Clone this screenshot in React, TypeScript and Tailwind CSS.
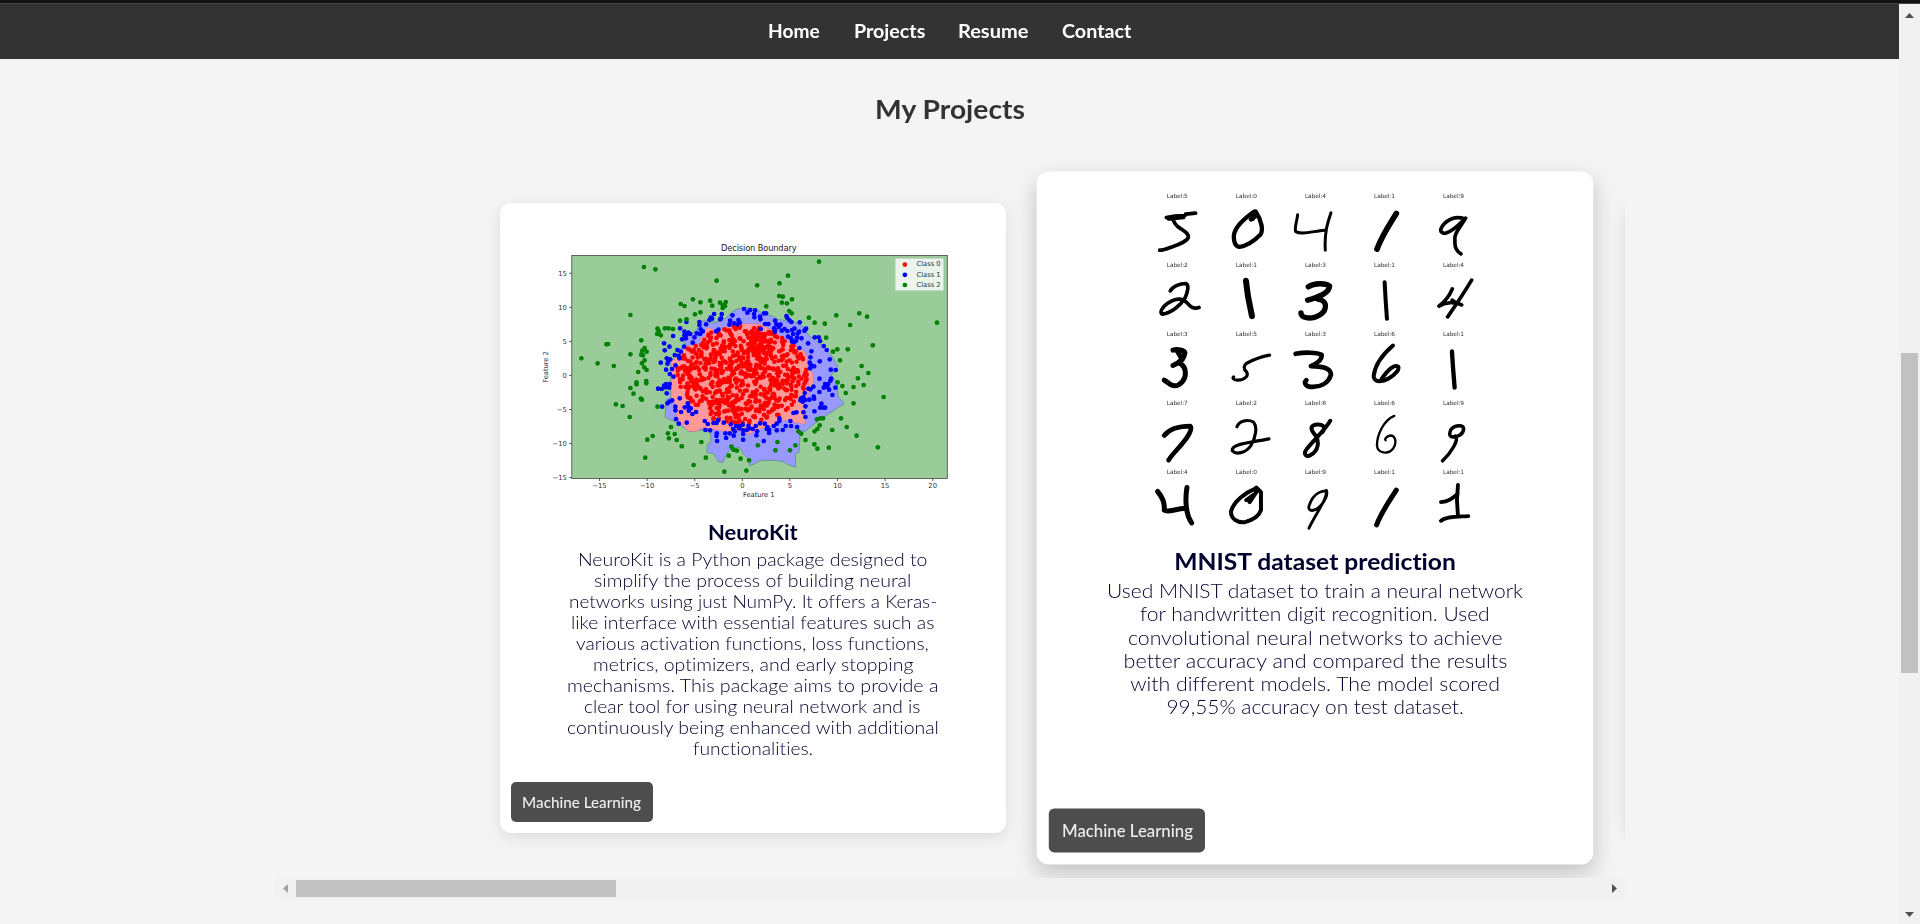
import { useLayoutEffect, useRef, useState } from "react";

type Point = [number, number];

/** One line of text, stretched or narrowed to take up the given width. */
function Line({ text, width }: { text: string; width: number }) {
  const ref = useRef<HTMLSpanElement>(null);
  const [scale, setScale] = useState(1);
  useLayoutEffect(() => {
    if (ref.current) setScale(width / ref.current.offsetWidth);
  }, [text, width]);
  return (
    <span className="mx-auto block text-left whitespace-nowrap" style={{ width }}>
      <span ref={ref} className="inline-block origin-left" style={{ transform: `scaleX(${scale})` }}>
        {text}
      </span>
    </span>
  );
}

const GREEN: Point[] = [
  [455, 231], [489, 238], [670, 272], [790, 286], [881, 257], [973, 215], [856, 280], [600, 328], [622, 337], [651, 332],
  [657, 347], [564, 342], [575, 348], [680, 338], [697, 336], [688, 345], [695, 348], [688, 354], [622, 367], [606, 373],
  [562, 392], [581, 388], [415, 375], [855, 318], [866, 320], [893, 328], [863, 338], [878, 340], [817, 349], [885, 363],
  [892, 370], [943, 383], [960, 398], [990, 401], [1024, 376], [1065, 405], [1092, 370], [1115, 380], [1322, 398], [1132, 466],
  [994, 443], [1027, 478], [1058, 478], [1014, 485], [1035, 511], [1099, 528], [1119, 549], [1088, 565], [1105, 585], [1075, 591],
  [1042, 588], [1028, 577], [1052, 609], [1075, 640], [1164, 621], [1147, 772], [1084, 737], [1055, 711], [1038, 685], [1012, 720],
  [1002, 773], [968, 776], [959, 763], [933, 750], [960, 724], [968, 717], [975, 706], [967, 688], [977, 685], [985, 685],
  [912, 724], [920, 731], [903, 766], [887, 781], [844, 781], [850, 756], [792, 766], [758, 842], [766, 811], [741, 806],
  [730, 782], [720, 779], [714, 770], [706, 797], [693, 845], [638, 803], [602, 825], [625, 756], [567, 769], [552, 750],
  [546, 732], [535, 711], [526, 730], [529, 745], [481, 738], [465, 749], [459, 803], [413, 681], [392, 648], [372, 643],
  [446, 626], [449, 629], [424, 611], [415, 594], [433, 577], [433, 583], [462, 573], [462, 580], [438, 546], [463, 540],
  [456, 532], [449, 520], [457, 511], [447, 494], [452, 496], [463, 485], [457, 474], [450, 482], [447, 451], [415, 493],
  [366, 528], [318, 520], [270, 505], [344, 463], [349, 462], [494, 432], [505, 436], [499, 424], [495, 416], [517, 415],
  [528, 415], [541, 417], [495, 650],
];

const BLUE: Point[] = [
  [252, 57], [262, 68], [270, 60], [285, 61], [282, 72], [312, 70], [318, 70], [300, 80], [283, 82], [217, 76],
  [210, 92], [235, 90], [239, 98], [232, 103], [222, 100], [208, 104], [185, 72], [183, 85], [180, 88], [162, 72],
  [152, 83], [156, 86], [148, 90], [118, 96], [118, 105], [138, 103], [79, 96], [60, 115], [73, 125], [85, 128],
  [78, 135], [90, 132], [73, 136], [39, 138], [103, 142], [110, 130], [122, 118], [128, 124], [120, 132], [168, 124],
  [175, 119], [66, 148], [77, 145], [98, 158], [12, 160], [28, 170], [14, 181], [52, 180], [62, 185], [72, 170],
  [44, 195], [56, 198], [58, 205], [20, 205], [25, 212], [2, 218], [30, 208], [22, 221], [46, 226], [36, 237],
  [18, 239], [29, 252], [40, 260], [5, 297], [12, 287], [18, 282], [29, 282], [27, 293], [16, 292], [20, 310],
  [-6, 296], [6, 350], [22, 340], [28, 335], [36, 331], [59, 325], [46, 350], [46, 361], [48, 387], [63, 366],
  [56, 401], [83, 340], [74, 352], [85, 350], [92, 355], [97, 372], [80, 398], [86, 362], [108, 366], [134, 393],
  [143, 402], [136, 420], [150, 421], [160, 399], [169, 399], [174, 391], [191, 398], [212, 403], [170, 430], [169, 438],
  [171, 453], [196, 430], [198, 444], [209, 430], [221, 437], [219, 417], [228, 408], [237, 415], [248, 404], [249, 421],
  [249, 432], [249, 449], [260, 420], [265, 408], [278, 417], [287, 408], [291, 424], [289, 436], [300, 400], [311, 453],
  [314, 401], [322, 411], [327, 420], [327, 429], [341, 408], [350, 401], [358, 385], [358, 393], [350, 421], [368, 420],
  [377, 408], [393, 408], [391, 393], [411, 411], [400, 369], [409, 367], [430, 367], [436, 381], [436, 349], [428, 335],
  [421, 331], [430, 321], [434, 309], [448, 329], [461, 320], [445, 296], [460, 290], [451, 298], [478, 306], [478, 266],
  [495, 282], [504, 282], [501, 290], [491, 293], [507, 299], [511, 272], [513, 266], [517, 315], [526, 293], [512, 239],
  [527, 240], [509, 208], [500, 180], [491, 168], [479, 214], [480, 153], [476, 142], [464, 142], [454, 184], [451, 202],
  [453, 226], [462, 229], [450, 235], [449, 218], [444, 160], [438, 116], [433, 122], [419, 97], [418, 174], [424, 145],
  [411, 142], [413, 130], [417, 125], [403, 155], [396, 155], [393, 145], [384, 140], [382, 123], [373, 117], [365, 122],
  [356, 111], [361, 104], [349, 103], [345, 92], [344, 125], [342, 115], [345, 120], [325, 102], [315, 102], [302, 117],
  [301, 88], [379, 78], [381, 83], [388, 91], [394, 96], [396, 120], [403, 116], [399, 132], [408, 152], [484, 341],
  [480, 353], [491, 353], [495, 353], [463, 364], [462, 326], [436, 330], [423, 325], [268, 415], [224, 424], [240, 408],
  [320, 417],
];

const RED_EDGE: Point[] = [
  [135, 118], [150, 113], [165, 122], [200, 112], [250, 101], [300, 102], [330, 118], [380, 150], [430, 180], [442, 200],
  [444, 235], [460, 252], [460, 288], [450, 300], [440, 320], [430, 345], [437, 380], [435, 403], [400, 397], [370, 390],
  [340, 406], [300, 418], [265, 433], [245, 422], [210, 428], [170, 420], [130, 412], [110, 424], [85, 424], [65, 405],
  [50, 385], [45, 345], [33, 320], [33, 215], [60, 190], [80, 168], [125, 158], [120, 145], [134, 138],
];

const BLUE_EDGE: Point[] = [
  [215, 66], [228, 58], [250, 53], [285, 56], [300, 66], [340, 80], [352, 88], [380, 92], [405, 97], [432, 112], [446, 136],
  [470, 153], [495, 176], [515, 198], [533, 228], [530, 238], [513, 255], [522, 265], [532, 285], [533, 318], [553, 341],
  [500, 375], [465, 400], [440, 420], [420, 432], [417, 487], [406, 492], [407, 532], [380, 522], [372, 516], [345, 511],
  [300, 512], [270, 528], [262, 505], [248, 490], [238, 472], [215, 476], [200, 490], [188, 518], [175, 515], [160, 490],
  [140, 488], [142, 462], [152, 458], [152, 418], [88, 424], [45, 395], [15, 382], [18, 330], [31, 320], [32, 215],
  [50, 190], [72, 165], [75, 140], [110, 120], [120, 98], [134, 90], [150, 98], [190, 92],
];

function inside([x, y]: Point, poly: Point[]) {
  let hit = false;
  for (let i = 0, j = poly.length - 1; i < poly.length; j = i++) {
    const [xi, yi] = poly[i];
    const [xj, yj] = poly[j];
    if (yi > y !== yj > y && x < ((xj - xi) * (y - yi)) / (yj - yi) + xi) hit = !hit;
  }
  return hit;
}

function redDots(): Point[] {
  let seed = 20;
  const rand = () => {
    seed = (seed * 16807) % 2147483647;
    return seed / 2147483647;
  };
  const dots: Point[] = [];
  while (dots.length < 700) {
    const a = rand() * Math.PI * 2;
    const r = Math.pow(rand(), 0.56);
    const p: Point = [246 + Math.cos(a) * r * 195, 254 + Math.sin(a) * r * 148];
    if (inside(p, RED_EDGE)) dots.push(p);
  }
  for (let i = 0; i < 45; i++) dots.push([300 + (rand() - 0.5) * 70, 158 + (rand() - 0.5) * 65]);
  return dots;
}

const RED = redDots();
const toPath = (pts: Point[]) => "M" + pts.map(([x, y]) => `${660 + x / 3} ${290 + y / 3}`).join("L") + "Z";

function DecisionBoundary() {
  return (
    <svg viewBox="499.9 203 506.25 317" className="block h-[317px] w-full shrink-0" fontFamily="DejaVu Sans, sans-serif" fill="#333">
      <rect x="571.7" y="255.5" width="375.5" height="223" fill="#99cc99" />
      <path d={toPath(BLUE_EDGE)} fill="#9999ff" stroke="#5c9a8c" strokeWidth="0.9" />
      <path d={toPath(RED_EDGE)} fill="#ff9999" stroke="#c870a0" strokeWidth="0.6" />
      <g fill="#ff0000">{RED.map(([x, y], i) => <circle key={i} cx={660 + x / 3} cy={290 + y / 3} r="2.25" />)}</g>
      <g fill="#0000ff">{BLUE.map(([x, y], i) => <circle key={i} cx={660 + x / 3} cy={290 + y / 3} r="2.35" />)}</g>
      <g fill="#008000">{GREEN.map(([x, y], i) => <circle key={i} cx={490 + x / 2.958} cy={190 + y / 3} r="2.35" />)}</g>
      <rect x="571.7" y="255.5" width="375.5" height="223" fill="none" stroke="#444" strokeWidth="0.8" />
      <text x="721" y="250.6" fontSize="8.3" textLength="75.5" fill="#222">Decision Boundary</text>
      <g fontSize="6.8" textAnchor="middle">
        {[-15, -10, -5, 0, 5, 10, 15, 20].map((v, i) => (
          <g key={v}>
            <path d={`M${599.4 + i * 47.6} 478.5v2.6`} stroke="#333" strokeWidth="0.8" />
            <text x={599.4 + i * 47.6} y="488.4">{String(v).replace("-", "−")}</text>
          </g>
        ))}
        <text x="758.7" y="497.3" textLength="31.5">Feature 1</text>
        <text transform="translate(548 367) rotate(-90)" textLength="31.5">Feature 2</text>
      </g>
      <g fontSize="6.8" textAnchor="end">
        {[15, 10, 5, 0, -5, -10, -15].map((v, i) => (
          <g key={v}>
            <path d={`M569 ${273.3 + i * 34.05}h2.6`} stroke="#333" strokeWidth="0.8" />
            <text x="566.8" y={275.8 + i * 34.05}>{String(v).replace("-", "−")}</text>
          </g>
        ))}
      </g>
      <rect x="895.2" y="258.4" width="48.3" height="32.2" rx="1.2" fill="#fff" fillOpacity="0.8" stroke="#ccc" strokeWidth="0.5" />
      {["#ff0000", "#0000ff", "#008000"].map((c, i) => (
        <g key={c}>
          <circle cx="904.8" cy={264.6 + i * 10.2} r="2.35" fill={c} />
          <text x="916.5" y={266.4 + i * 10.1} fontSize="6.8" textLength="24">{`Class ${i}`}</text>
        </g>
      ))}
    </svg>
  );
}

/** Pen strokes of each handwritten sample: [label, path, stroke width]. */
const SAMPLES: [string, string, number][][] = [
  [
    ["5", "M78 112L104 108L134 106M84 116L130 112M136 102L166 99M98 110C98 128 108 138 122 146C134 154 146 160 144 172C138 186 112 194 90 202C80 206 68 210 58 210", 11],
    ["0", "M342 94C316 112 286 136 281 164C279 186 286 200 298 200C318 198 344 180 360 164C370 152 364 120 346 94M342 98L338 116M348 106L332 118", 13],
    ["4", "M472 104C470 124 462 142 466 154C482 166 522 152 552 150M572 98C562 128 552 156 555 210", 9],
    ["1", "M768 100C750 130 728 160 710 207", 17],
    ["9", "M972 116C946 106 920 118 906 138C894 156 908 164 924 156C946 146 960 128 976 114C960 142 940 160 944 182C942 204 950 214 962 221", 11],
  ],
  [
    ["2", "M90 332C98 318 120 310 136 310C148 314 142 336 134 354C122 374 94 398 66 402C56 398 66 380 84 368C104 356 124 352 138 366C150 380 160 388 176 382", 11],
    ["1", "M317 302L323 348L335 408", 18],
    ["3", "M504 320C522 308 556 308 568 318C566 336 546 348 502 360M530 356C554 360 560 372 552 392C538 412 508 418 490 410C482 406 482 402 482 398", 16],
    ["1", "M733 306L736 360L740 416", 12],
    ["4", "M936 326C928 346 914 364 896 378C914 366 944 364 964 374M994 300C976 330 950 370 922 410M936 360L950 370", 11],
  ],
  [
    ["3", "M98 510C112 506 132 510 134 518C132 534 116 548 98 556M112 514L126 538M116 548C132 556 138 570 134 590C126 612 108 622 92 614C84 608 76 602 72 600", 15],
    ["5", "M388 525C358 530 336 540 318 550C312 554 308 566 318 574C328 588 310 600 292 600C280 600 276 594 280 590", 9.5],
    ["3", "M466 521C492 516 530 516 544 524C546 538 530 550 512 558C544 558 572 564 572 584C564 610 540 622 510 620C496 618 490 608 498 600", 14],
    ["6", "M758 496C730 520 704 552 700 588C702 610 728 604 746 594C764 584 778 568 774 560C762 550 742 570 724 596", 12],
    ["1", "M935 514L938 560L943 622", 13],
  ],
  [
    ["7", "M72 766C86 748 116 738 150 738C158 746 142 772 126 790C112 808 94 824 85 840", 14],
    ["2", "M290 740C296 722 322 716 340 726C352 740 346 774 332 796C316 820 286 824 276 812C272 792 316 790 386 776", 9.5],
    ["8", "M570 722C552 752 526 774 500 806C486 824 500 832 512 824C534 812 538 786 526 766C512 750 508 738 524 734C544 730 560 738 546 756", 12],
    ["6", "M762 707C730 720 710 764 710 796C712 820 744 824 758 806C772 786 764 766 750 766C738 768 732 778 736 780", 7],
    ["9", "M946 768C930 776 924 764 932 748C946 732 970 734 970 746C970 762 952 772 936 770M946 768C956 780 932 818 907 842", 10.5],
  ],
  [
    ["4", "M52 934C64 948 74 968 72 990C84 998 104 986 136 984M140 922C134 958 136 1002 154 1028", 15],
    ["0", "M348 924C314 938 280 964 272 994C272 1016 290 1028 314 1026C336 1020 356 1008 362 990L362 936L348 922M352 930L328 966M340 944L318 960", 12],
    ["9", "M558 932C532 932 514 952 506 978C502 996 524 994 538 980C554 964 564 942 558 930C562 956 530 994 506 1044", 8.5],
    ["1", "M768 930C748 962 724 994 709 1034", 15],
    ["1", "M953 914L950 960L953 1008M902 966C924 964 940 954 952 940M902 1022C918 1008 948 1010 984 1008", 11.5],
  ],
];

function DigitSamples() {
  return (
    <svg viewBox="-310.5 -26 1670 1128.6" className="block h-[342px] w-full shrink-0" fontFamily="DejaVu Sans, sans-serif">
      {SAMPLES.map((row, r) =>
        row.map(([label, d, w], c) => (
          <g key={`${r}-${c}`}>
            <text x={111 + c * 207.2} y={55 + r * 207} fontSize="17.5" textAnchor="middle" textLength="63" fill="#333">
              {`Label:${label}`}
            </text>
            <path className="blur-[2px]" d={d} fill="none" stroke="#000" strokeWidth={w} strokeLinecap="round" strokeLinejoin="round" />
          </g>
        )),
      )}
    </svg>
  );
}

const Tag = () => (
  <div className="mt-auto mb-[11px] ml-[11px] flex h-10 w-[142px] items-center justify-center self-start rounded-[5px] bg-[#4d4d4d] text-[15px] font-medium text-[#eeeeee]">
    <Line text="Machine Learning" width={119} />
  </div>
);

const NEURO: [string, number][] = [
  ["NeuroKit is a Python package designed to", 349],
  ["simplify the process of building neural", 317],
  ["networks using just NumPy. It offers a Keras-", 368],
  ["like interface with essential features such as", 363],
  ["various activation functions, loss functions,", 353],
  ["metrics, optimizers, and early stopping", 320],
  ["mechanisms. This package aims to provide a", 371],
  ["clear tool for using neural network and is", 337],
  ["continuously being enhanced with additional", 372],
  ["functionalities.", 120],
];

const MNIST: [string, number][] = [
  ["Used MNIST dataset to train a neural network", 378],
  ["for handwritten digit recognition. Used", 318],
  ["convolutional neural networks to achieve", 341],
  ["better accuracy and compared the results", 349],
  ["with different models. The model scored", 336],
  ["99,55% accuracy on test dataset.", 270],
];

function Body({ title, titleWidth, lines }: { title: string; titleWidth: number; lines: [string, number][] }) {
  return (
    <div className="text-center text-[#00002d]">
      <h3 className="text-[21px] leading-6 font-bold">
        <Line text={title} width={titleWidth} />
      </h3>
      <p className="mt-[5px] text-[18.4px] leading-[21px] font-light">
        {lines.map(([text, width]) => <Line key={text} text={text} width={width} />)}
      </p>
    </div>
  );
}

const NAV: [string, number][] = [["Home", 52], ["Projects", 71], ["Resume", 70], ["Contact", 69]];

export default function App() {
  return (
    <div className="flex h-[924px] w-[1920px] flex-col overflow-hidden bg-[#f4f4f4] font-[Lato,sans-serif] [font-variant-ligatures:none]">
      <div className="h-1 shrink-0 border-b border-[#444] bg-[#121212]" />
      <div className="flex min-h-0 flex-1">
        <main className="flex w-[1899px] flex-col items-center">
          <nav className="flex h-[55px] w-full items-center justify-center gap-[33.5px] bg-[#333333] text-[18px] font-bold text-white">
            {NAV.map(([text, width]) => <a key={text}><Line text={text} width={width} /></a>)}
          </nav>
          <h2 className="mt-[34px] h-8 text-[26px] leading-8 font-bold text-[#333333]">
            <Line text="My Projects" width={150} />
          </h2>
          <section className="mt-[7px] flex h-[746px] w-[1350px] shrink-0 gap-[56.25px] overflow-hidden pt-[71px] pl-[225px]">
            <article className="flex h-[630px] w-[506.25px] shrink-0 flex-col rounded-[11px] bg-white shadow-[0_4px_15px_rgba(0,0,0,0.1)]">
              <DecisionBoundary />
              <Body title="NeuroKit" titleWidth={90} lines={NEURO} />
              <Tag />
            </article>
            <article className="flex h-[630px] w-[506.25px] shrink-0 scale-110 flex-col rounded-[11px] bg-white shadow-[0_8px_20px_rgba(0,0,0,0.2)]">
              <DigitSamples />
              <Body title="MNIST dataset prediction" titleWidth={256} lines={MNIST} />
              <Tag />
            </article>
            <article className="h-[630px] w-[506.25px] shrink-0 rounded-[11px] bg-white shadow-[0_4px_15px_rgba(0,0,0,0.1)]" />
          </section>
          <div className="flex h-[21px] w-[1350px] shrink-0 items-center justify-between bg-[#f1f1f1] pr-2 pl-[8.5px]">
            <div className="flex items-center gap-2">
              <svg className="h-[9px] w-[5px]" viewBox="0 0 5 9"><path d="M5 0v9L0 4.5z" fill="#a3a3a3" /></svg>
              <div className="h-[17px] w-80 bg-[#c1c1c1]" />
            </div>
            <svg className="h-[9px] w-[5px]" viewBox="0 0 5 9"><path d="M0 0v9L5 4.5z" fill="#505050" /></svg>
          </div>
        </main>
        <aside className="flex w-[21px] flex-col items-center bg-[#f1f1f1] pt-[9px]">
          <svg className="h-[5px] w-[9px]" viewBox="0 0 9 5"><path d="M0 5h9L4.5 0z" fill="#505050" /></svg>
          <div className="mt-[335px] h-80 w-[17px] bg-[#c1c1c1]" />
          <svg className="mt-auto mb-[7px] h-[5px] w-[9px]" viewBox="0 0 9 5"><path d="M0 0h9L4.5 5z" fill="#505050" /></svg>
        </aside>
      </div>
    </div>
  );
}
